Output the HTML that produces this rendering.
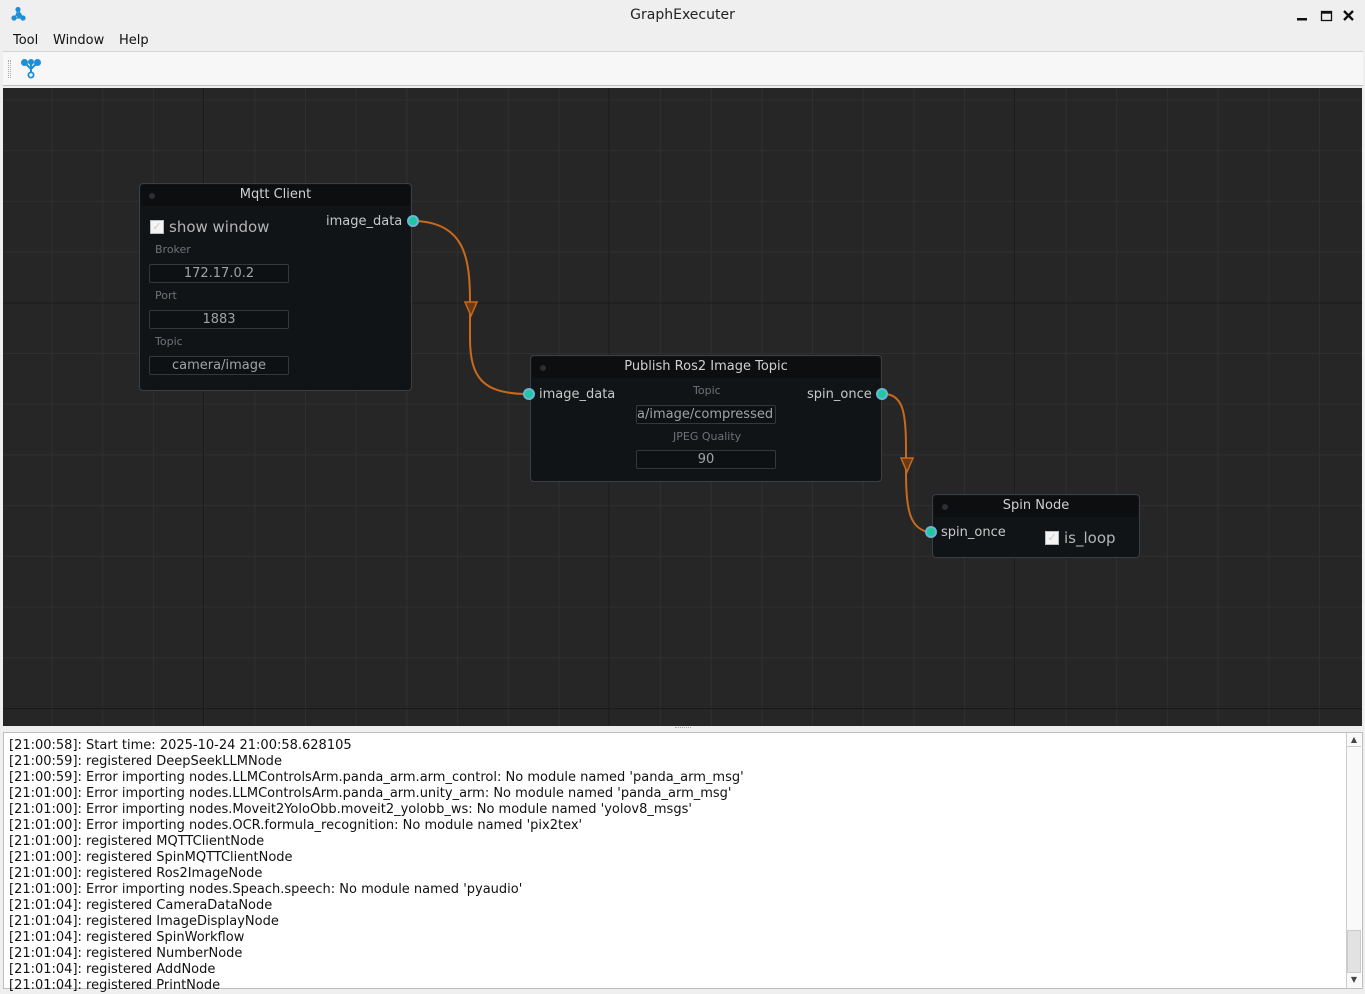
<!DOCTYPE html>
<html><head><meta charset="utf-8">
<style>
*{margin:0;padding:0;box-sizing:border-box}
body{width:1365px;height:992px;background:#efefef;font-family:"DejaVu Sans","Liberation Sans",sans-serif;position:relative;overflow:hidden;color:#111}
.abs{position:absolute}
.title{left:0;top:7px;width:1365px;text-align:center;font-size:14px;color:#222}
.menu{top:33px;font-size:13px;color:#111}
.toolbar{left:3px;top:51px;width:1360px;height:35px;background:#f7f7f7;border-top:1px solid #d4d4d4;border-bottom:1px solid #bdbdbd}
.canvas{left:3px;top:88px;width:1359px;height:638px;background:#262626;overflow:hidden}
.node{position:absolute;background:#111417;border:1px solid #3b3f43;border-radius:4px;color:#c4c4c4}
.hd{position:absolute;left:1px;right:1px;top:1px;height:21px;background:#0c0e10;border-radius:3px 3px 0 0;text-align:center;font-size:13px;line-height:19px;color:#d0d0d0}
.dot{position:absolute;left:8px;top:8px;width:6px;height:6px;border-radius:50%;background:#2c2f33}
.lbl{position:absolute;font-size:11px;color:#6e7276}
.fld{position:absolute;height:19px;border:1px solid #34383c;border-radius:2px;background:#0e1113;font-size:13px;color:#a0a2a4;text-align:center;line-height:17px;overflow:hidden;white-space:nowrap}
.pt{position:absolute;font-size:13px;color:#c8c8c8}
.cb{position:absolute;width:14px;height:14px;background:#f4f4f4;border:1px solid #bbb;font-size:11px;color:#ccc;line-height:12px;text-align:center}
.log{left:3px;top:732px;width:1360px;height:257px;background:#fff;border:1px solid #bdbdbd}
.log pre{font-family:"DejaVu Sans","Liberation Sans",sans-serif;font-size:13px;line-height:16px;color:#111;padding:5px 0 0 5px;white-space:pre}
</style></head><body>
<svg class="abs" style="left:10px;top:6px" width="18" height="16" viewBox="0 0 18 16"><g fill="#1e8fd6" stroke="#1e8fd6" stroke-width="1.2"><line x1="8" y1="4" x2="5" y2="12"/><line x1="8" y1="4" x2="13" y2="12"/><line x1="5" y1="12" x2="13" y2="12"/><circle cx="8" cy="3.5" r="2"/><circle cx="4" cy="12" r="2"/><circle cx="13" cy="12" r="2"/><circle cx="9" cy="9" r="2"/></g></svg>
<div class="abs title">GraphExecuter</div>
<svg class="abs" style="left:1294px;top:8px" width="64" height="16"><rect x="3" y="10" width="10" height="2.5" fill="#111"/><rect x="27.5" y="3.5" width="10" height="9" fill="none" stroke="#111" stroke-width="1.3"/><rect x="27.5" y="3.5" width="10" height="2.2" fill="#111"/><path d="M50 3 L59 12 M59 3 L50 12" stroke="#111" stroke-width="2.3"/></svg>
<div class="abs menu" style="left:13px">Tool</div>
<div class="abs menu" style="left:53px">Window</div>
<div class="abs menu" style="left:119px">Help</div>
<div class="abs toolbar"></div>
<div class="abs" style="left:8px;top:60px;width:3px;height:18px;border-left:1px dotted #aaa;border-right:1px dotted #aaa"></div>
<svg class="abs" style="left:21px;top:59px" width="20" height="20" viewBox="0 0 20 20"><g fill="#1e8fd6" stroke="#1e8fd6" stroke-width="2"><line x1="4" y1="4" x2="10" y2="10"/><line x1="16" y1="4" x2="10" y2="10"/><line x1="10" y1="3" x2="10" y2="14"/><circle cx="3.5" cy="3.5" r="2.5"/><circle cx="16.5" cy="3.5" r="2.5"/><circle cx="10" cy="3" r="2"/></g><circle cx="10" cy="16" r="2.6" fill="none" stroke="#1e8fd6" stroke-width="1.8"/></svg>
<div class="abs canvas">
<svg width="1359" height="638" style="position:absolute;left:0;top:0">
<defs>
<pattern id="mi" patternUnits="userSpaceOnUse" width="50.7" height="50.7" x="-2.2" y="11.5"><path d="M0.5 0 V50.7 M0 0.5 H50.7" stroke="#2f2f2f" stroke-width="1" fill="none"/></pattern>
<pattern id="ma" patternUnits="userSpaceOnUse" width="405.6" height="405.6" x="200" y="214.5"><path d="M0.5 0 V405.6 M0 0.5 H405.6" stroke="#181818" stroke-width="1" fill="none"/></pattern>
</defs>
<rect width="1359" height="638" fill="url(#mi)"/>
<rect width="1359" height="638" fill="url(#ma)"/>
<g fill="none" stroke="#c9691c" stroke-width="2">
<path d="M414 133 C462 136 467 170 467 215 L467 250 C467 290 480 305 522 306"/>
<path d="M883 306 C900 308 903 325 903 360 L903 385 C903 425 908 440 925 444"/>
</g>
<path d="M462 214 L474 214 L468 228 Z" fill="#6a3a12" stroke="#c9691c" stroke-width="1.5"/>
<path d="M898 370 L910 370 L904 384 Z" fill="#6a3a12" stroke="#c9691c" stroke-width="1.5"/>
</svg>
<div class="node" style="left:136px;top:95px;width:273px;height:208px">
<div class="hd"><div class="dot"></div>Mqtt Client</div>
<div class="cb" style="left:10px;top:36px">✓</div>
<div class="pt" style="left:29px;top:34px;font-size:15px;color:#b4b4b4">show window</div>
<div class="pt" style="left:186px;top:30px">image_data</div>
<div class="lbl" style="left:15px;top:59px">Broker</div>
<div class="fld" style="left:9px;top:80px;width:140px">172.17.0.2</div>
<div class="lbl" style="left:15px;top:105px">Port</div>
<div class="fld" style="left:9px;top:126px;width:140px">1883</div>
<div class="lbl" style="left:15px;top:151px">Topic</div>
<div class="fld" style="left:9px;top:172px;width:140px">camera/image</div>
</div>
<div class="node" style="left:527px;top:267px;width:352px;height:127px">
<div class="hd"><div class="dot"></div>Publish Ros2 Image Topic</div>
<div class="pt" style="left:8px;top:31px">image_data</div>
<div class="pt" style="left:276px;top:31px">spin_once</div>
<div class="lbl" style="left:162px;top:28px">Topic</div>
<div class="fld" style="left:105px;top:49px;width:140px;text-align:right;padding-right:3px">a/image/compressed</div>
<div class="lbl" style="left:142px;top:74px">JPEG Quality</div>
<div class="fld" style="left:105px;top:94px;width:140px">90</div>
</div>
<div class="node" style="left:929px;top:406px;width:208px;height:64px">
<div class="hd"><div class="dot"></div>Spin Node</div>
<div class="pt" style="left:8px;top:30px">spin_once</div>
<div class="cb" style="left:112px;top:36px">✓</div>
<div class="pt" style="left:131px;top:34px;font-size:15px;color:#b4b4b4">is_loop</div>
</div>
<svg width="1359" height="638" style="position:absolute;left:0;top:0">
<g fill="#1fc9a0" stroke="#6fb4d8" stroke-width="2">
<circle cx="410" cy="133" r="5"/><circle cx="526" cy="306" r="5"/><circle cx="879" cy="306" r="5"/><circle cx="928" cy="444" r="5"/>
</g>
</svg>
</div>
<div class="abs" style="left:675px;top:727px;width:16px;height:2px;border-top:1px dotted #aaa"></div>
<div class="abs log"><pre>[21:00:58]: Start time: 2025-10-24 21:00:58.628105
[21:00:59]: registered DeepSeekLLMNode
[21:00:59]: Error importing nodes.LLMControlsArm.panda_arm.arm_control: No module named 'panda_arm_msg'
[21:01:00]: Error importing nodes.LLMControlsArm.panda_arm.unity_arm: No module named 'panda_arm_msg'
[21:01:00]: Error importing nodes.Moveit2YoloObb.moveit2_yolobb_ws: No module named 'yolov8_msgs'
[21:01:00]: Error importing nodes.OCR.formula_recognition: No module named 'pix2tex'
[21:01:00]: registered MQTTClientNode
[21:01:00]: registered SpinMQTTClientNode
[21:01:00]: registered Ros2ImageNode
[21:01:00]: Error importing nodes.Speach.speech: No module named 'pyaudio'
[21:01:04]: registered CameraDataNode
[21:01:04]: registered ImageDisplayNode
[21:01:04]: registered SpinWorkflow
[21:01:04]: registered NumberNode
[21:01:04]: registered AddNode
[21:01:04]: registered PrintNode</pre>
<div class="abs" style="left:1342px;top:0;width:15px;height:255px;background:#f9f9f9;border-left:1px solid #ccc">
<div class="abs" style="left:0;top:0;width:14px;height:14px;border-bottom:1px solid #ccc;font-size:8px;text-align:center;line-height:14px;color:#444">▲</div>
<div class="abs" style="left:0;top:197px;width:14px;height:43px;background:#e2e2e2;border:1px solid #ccc"></div>
<div class="abs" style="left:0;top:240px;width:14px;height:14px;font-size:8px;text-align:center;line-height:14px;color:#444">▼</div>
</div>
</div>
</body></html>
